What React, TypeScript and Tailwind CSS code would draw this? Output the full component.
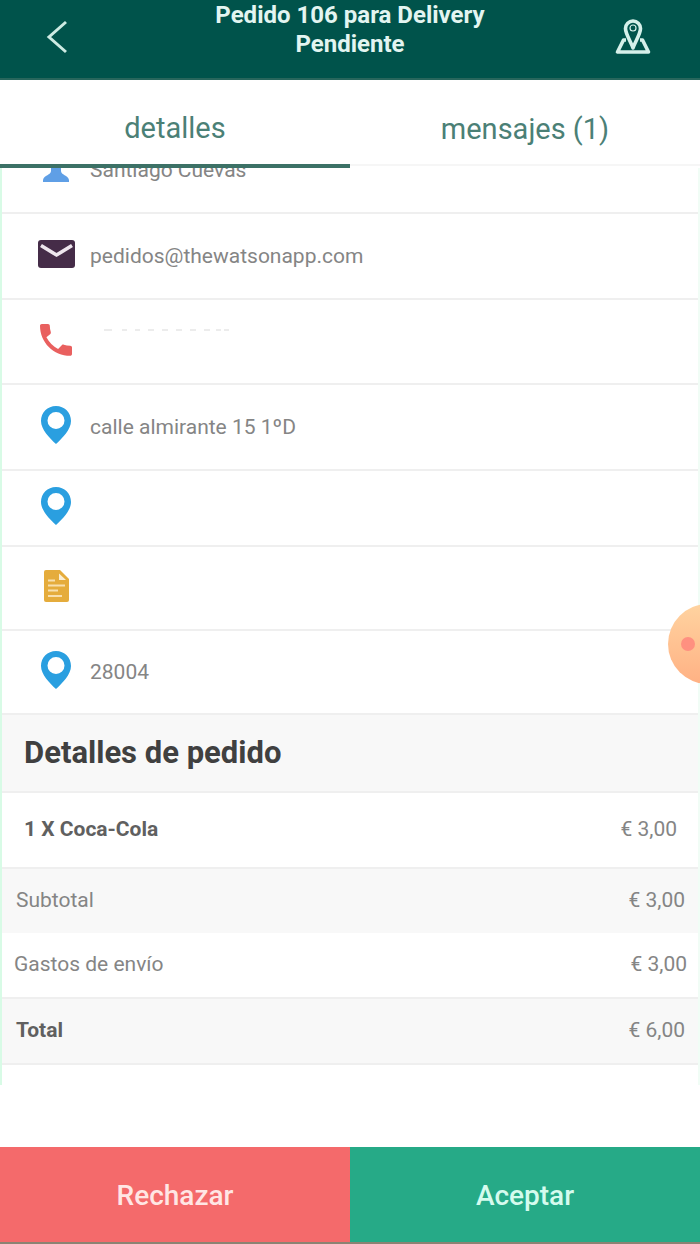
import type { ReactNode } from "react";

interface ContactRow {
  id: string;
  icon: ReactNode;
  text?: string;
  className: string;
}

interface Amount {
  label: string;
  value: string;
  className: string;
}

const CONTACT: ContactRow[] = [
  { id: "email", icon: <MailIcon />, text: "pedidos@thewatsonapp.com", className: "h-[86px]" },
  { id: "phone", icon: <PhoneIcon />, className: "h-[85px]" },
  { id: "street", icon: <PinIcon />, text: "calle almirante 15 1ºD", className: "h-[86px]" },
  { id: "city", icon: <PinIcon />, className: "h-[76px]" },
  { id: "note", icon: <NoteIcon />, className: "h-[84px]" },
  { id: "zip", icon: <PinIcon />, text: "28004", className: "h-[84px]" },
];

const AMOUNTS: Amount[] = [
  { label: "Subtotal", value: "€ 3,00", className: "h-16 bg-[#f8f8f8] pr-[13px] pl-[14px]" },
  { label: "Gastos de envío", value: "€ 3,00", className: "h-[66px] border-b-2 border-[#efefef] pr-[11px] pl-3" },
  { label: "Total", value: "€ 6,00", className: "h-[66px] border-b-2 border-[#efefef] bg-[#f8f8f8] pr-[13px] pl-[14px]" },
];

export default function App() {
  return (
    <div className="relative flex min-h-screen flex-col overflow-hidden bg-white font-['Roboto',sans-serif] text-[21px] leading-7 text-[#858585]">
      <Header />
      <Tabs />

      <main className="mb-auto border-x-2 border-l-[#d8fbe6] border-r-[#f1fdf6] pb-5">
        <ul>
          <li className="flex h-[46px] items-end overflow-hidden border-b-2 border-[#efefef] pl-[34px]">
            <span className="flex w-[54px] shrink-0 pb-[30px]">
              <PersonIcon />
            </span>
            <span className="pb-7">Santiago Cuevas</span>
          </li>
          {CONTACT.map((row) => (
            <li
              key={row.id}
              className={`flex items-center border-b-2 border-[#efefef] pl-[34px] ${row.className}`}
            >
              <span className="flex w-[54px] shrink-0 pb-1">{row.icon}</span>
              {row.id === "phone" ? <HiddenPhone /> : <span>{row.text}</span>}
            </li>
          ))}
        </ul>

        <section>
          <h2 className="flex h-[78px] items-center border-b-2 border-[#efefef] bg-[#f8f8f8] px-[22px] text-[31px] font-bold text-[#404040]">
            Detalles de pedido
          </h2>
          <div className="flex h-[76px] items-center justify-between border-b-2 border-[#efefef] pr-[21px] pb-[2px] pl-[22px]">
            <span className="font-bold text-[#606060]">1 X Coca-Cola</span>
            <span>€ 3,00</span>
          </div>
          {AMOUNTS.map((a) => (
            <div key={a.label} className={`flex items-center justify-between pb-[2px] ${a.className}`}>
              <span className={a.label === "Total" ? "font-bold text-[#606060]" : undefined}>
                {a.label}
              </span>
              <span>{a.value}</span>
            </div>
          ))}
        </section>
      </main>

      <footer className="grid h-[97px] grid-cols-2 border-b-2 border-[#8b8373] text-[28px] font-medium">
        <button type="button" className="bg-[#f46a6b] pt-[2px] text-[#ffe6e4]">
          Rechazar
        </button>
        <button type="button" className="bg-[#26aa87] pt-[2px] text-[#d5fbee]">
          Aceptar
        </button>
      </footer>

      <button
        type="button"
        aria-label="Grabar"
        className="absolute top-[604px] -right-12 flex size-20 items-center rounded-full bg-linear-to-b from-[#ffd3a0] to-[#ffb184] pl-[13px]"
      >
        <span className="size-[14px] rounded-full bg-[#ff9080]" />
      </button>
    </div>
  );
}

function Header() {
  return (
    <header className="grid h-20 grid-cols-[60px_1fr_60px] items-start border-b-2 border-[#28665c] bg-[#00534b] pr-12 pl-10 text-[#e3f5f1]">
      <button type="button" aria-label="Volver" className="mt-5 flex">
        <svg width="32" height="34" viewBox="0 0 32 34" fill="none" stroke="#cdebe3" strokeWidth="3">
          <path d="M26 2 9 17l17 15" />
        </svg>
      </button>
      <h1 className="pt-px pl-2 text-center text-2xl leading-[29px] font-bold">
        Pedido 106 para Delivery
        <br />
        Pendiente
      </h1>
      <button type="button" aria-label="Mapa" className="mt-[18px] flex justify-end">
        <MapIcon />
      </button>
    </header>
  );
}

function Tabs() {
  return (
    <nav className="grid h-[88px] grid-cols-2 text-[29px] text-[#4b8076]">
      <button type="button" className="border-b-4 border-[#3c7166] pt-3">
        detalles
      </button>
      <button type="button" className="mb-[2px] border-b-2 border-[#f6f6f6] pt-[14px]">
        mensajes (1)
      </button>
    </nav>
  );
}

// Only the tops of the digits are left visible
function HiddenPhone() {
  return (
    <svg className="mb-6 ml-3" width="130" height="2" stroke="#ececec" strokeWidth="2">
      <path d="M2 1h8M20 1h5M33 1h5M46 1h6M60 1h6M74 1h6M88 1h6M102 1h6M114 1h5M122 1h5" />
    </svg>
  );
}

function MapIcon() {
  return (
    <svg width="38" height="38" viewBox="0 0 38 38" fill="none" stroke="#d5f0ea" strokeWidth="3.6" strokeLinejoin="round">
      <path d="M19 30C17 24 11.500 16 11.500 10.500a7.500 7.500 0 0 1 15 0C26.500 16 21 24 19 30Z" />
      <circle cx="19" cy="10" r="3" strokeWidth="1.2" />
      <path d="M12 22H9.500L3.500 34h31l-6-12H26" />
    </svg>
  );
}

function PersonIcon() {
  return (
    <svg width="40" height="34" viewBox="0 0 40 34" fill="#5f9fe6">
      <ellipse cx="20" cy="10" rx="8" ry="9" />
      <path d="M15 16h10v7c0 4 7 4 8 9v2H7v-2c1-5 8-5 8-9Z" />
    </svg>
  );
}

function MailIcon() {
  return (
    <svg width="40" height="30" viewBox="0 0 40 30">
      <rect x="2" y="1" width="37" height="28" rx="3" fill="#452c48" />
      <path d="M5 6.500 20.500 16 36 6.500" fill="none" stroke="#eee6ee" strokeWidth="3.600" />
    </svg>
  );
}

function PhoneIcon() {
  return (
    <svg width="40" height="32" viewBox="0 0 40 32" fill="#e9605f">
      <path d="M10.400 13.300c2.600 5 6.700 9.200 11.700 11.700l3.900-3.900c.5-.5 1.200-.6 1.800-.4 2 .7 4.100 1 6.400 1 1 0 1.800.8 1.800 1.800V30c0 1-.8 1.800-1.800 1.800C17.500 31.800 4 18.300 4 1.700 4 .8 4.800 0 5.800 0H12c1 0 1.800.8 1.800 1.800 0 2.200.4 4.300 1 6.300.2.600.1 1.300-.4 1.800z" />
    </svg>
  );
}

function PinIcon() {
  return (
    <svg width="40" height="38" viewBox="0 0 40 38">
      <path
        d="M20 0C11.500 0 5 6.500 5 15c0 8.500 8.500 17 15 23 6.500-6 15-14.500 15-23C35 6.500 28.500 0 20 0Zm0 6a8.500 8.500 0 1 1 0 17 8.500 8.500 0 0 1 0-17Z"
        fill="#2a9fe0"
      />
    </svg>
  );
}

function NoteIcon() {
  return (
    <svg width="40" height="32" viewBox="0 0 40 32">
      <path d="M10 0h14l9 9v21a2 2 0 0 1-2 2H10a2 2 0 0 1-2-2V2a2 2 0 0 1 2-2Z" fill="#e5ac3c" />
      <path d="M23 3.500V10h7Z" fill="#fbeed2" />
      <path d="M12 10.500h7M12 15.500h17M12 20.500h10M12 26h14" stroke="#f8dfae" strokeWidth="2.200" />
    </svg>
  );
}
